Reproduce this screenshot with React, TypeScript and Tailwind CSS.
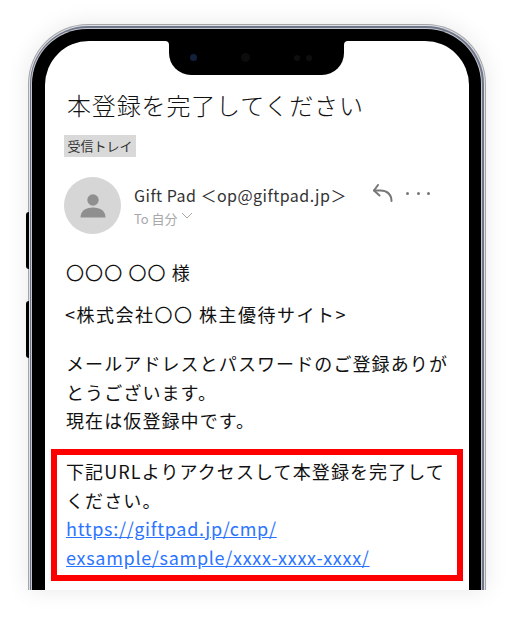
export default function App() {
  const jp = { fontFamily: '"Noto Sans CJK JP", "Noto Sans", sans-serif' };
  return (
    <div className="w-[512px] h-[618px] bg-white overflow-hidden" style={jp}>
      <div className="w-[458px] h-[566px] ml-[28px] mt-[24px] relative">
        <div className="absolute left-[-2px] top-[188px] w-[3px] h-[57px] bg-black rounded-l-sm" />
        <div className="absolute left-[-2px] top-[277px] w-[3px] h-[57px] bg-black rounded-l-sm" />
        <div className="h-full rounded-t-[60px] bg-[#a5a6aa] pt-[1px] px-[1px] shadow-[0_0_24px_rgba(0,0,0,0.09)]">
          <div className="h-full rounded-t-[59px] bg-[#e0e1e4] pt-[1px] px-[1px]">
            <div className="h-full rounded-t-[58px] bg-[#6f7689] pt-[2px] pl-[1px] pr-[2px]">
              <div className="h-full rounded-t-[56px] bg-[#c4c7cf] pt-[1px] px-[1px]">
                <div className="h-full rounded-t-[55px] bg-black pt-[12px] pl-[13px] pr-[12px]">
                  <div className="relative h-full rounded-t-[44px] bg-white pl-[19px] pr-[5px] pt-[48px] text-[#111]">
                    <div className="absolute left-[120px] top-0 w-[4px] h-[4px] bg-black"><div className="w-full h-full bg-white rounded-tr-[4px]" /></div>
                    <div className="absolute left-[299px] top-0 w-[4px] h-[4px] bg-black"><div className="w-full h-full bg-white rounded-tl-[4px]" /></div>
                    <div className="absolute left-[124px] top-[-1px] w-[175px] h-[35px] bg-black rounded-b-[22px] flex items-center pl-[21px]">
                      <div className="w-[7px] h-[7px] rounded-full bg-[#14213d] shrink-0" />
                      <div className="ml-[44px] w-[9px] h-[9px] rounded-full bg-[#0c0c0c] shrink-0" />
                      <div className="ml-[44px] flex gap-[6px]">
                        <div className="w-[6px] h-[6px] rounded-full bg-[#0e0e0e]" />
                        <div className="w-[6px] h-[6px] rounded-full bg-[#0e0e0e]" />
                      </div>
                    </div>
                    <div className="text-[24px] leading-[32px] tracking-[0.85px] font-light ml-[3px]">本登録を完了してください</div>
                    <div className="mt-[14px] w-[72px] h-[22px] bg-[#d9d9d9] text-[13px] leading-[22px] text-center text-[#333]">受信トレイ</div>
                    <div className="mt-[20px] flex">
                      <div className="w-[57px] h-[57px] rounded-full bg-[#d6d6d6] flex items-center justify-center shrink-0">
                        <svg width="26" height="26" viewBox="0 0 26 26" fill="#8f8f8f">
                          <circle cx="13" cy="7" r="5.7" />
                          <path d="M0.5 24.5c0-6.5 5-10 12.5-10s12.5 3.5 12.5 10z" />
                        </svg>
                      </div>
                      <div className="ml-[13px] pt-[7px] w-[226px] shrink-0">
                        <div className="text-[16px] leading-[22px] whitespace-nowrap tracking-[0.48px] text-[#333]">Gift Pad ＜op@giftpad.jp＞</div>
                        <div className="mt-[4px] flex items-start text-[13px] leading-[18px] text-[#a8a8a8]">
                          <span>To 自分</span>
                          <svg className="ml-[3px] mt-[2px]" width="12" height="7" viewBox="0 0 12 7" fill="none" stroke="#a8a8a8" strokeWidth="1"><path d="M1 1l5 5 5-5" /></svg>
                        </div>
                      </div>
                      <div className="ml-[13px] pt-[7px] flex items-start shrink-0">
                        <svg width="20" height="18" viewBox="0 0 20 18" fill="none" stroke="#777" strokeWidth="2" strokeLinecap="round" strokeLinejoin="round"><path d="M5 1L1 6.5l5.5 5" /><path d="M1 6.5h6.5c6 0 11 3.500 11 10.500" /></svg>
                        <div className="ml-[13px] mt-[8px] flex gap-[7.500px]">
                          <div className="w-[3px] h-[3px] rounded-full bg-[#777]" />
                          <div className="w-[3px] h-[3px] rounded-full bg-[#777]" />
                          <div className="w-[3px] h-[3px] rounded-full bg-[#777]" />
                        </div>
                      </div>
                    </div>
                    <div className="mt-[24px] ml-[2px] text-[18px] leading-[28.5px] tracking-[1.1px]">
                      <div>〇〇〇 〇〇 様</div>
                      <div className="mt-[13px] ml-[-1px] tracking-[1.5px]">&lt;株式会社〇〇 株主優待サイト&gt;</div>
                      <div className="mt-[21px] w-[392px]">メールアドレスとパスワードのご登録ありがとうございます。<br />現在は仮登録中です。</div>
                    </div>
                    <div className="mt-[14.500px] ml-[-13px] w-[412px] h-[132px] border-[6px] border-[#ff0000] pl-[9px] pt-[2px] text-[18px] leading-[28.5px] tracking-[1.1px]">
                      <div className="w-[380px]">下記URLよりアクセスして本登録を完了してください。</div>
                      <a className="block text-[#2b74ff] underline whitespace-nowrap tracking-[0.7px]">https://giftpad.jp/cmp/<br />exsample/sample/xxxx-xxxx-xxxx/</a>
                    </div>
                  </div>
                </div>
              </div>
            </div>
          </div>
        </div>
      </div>
    </div>
  );
}
